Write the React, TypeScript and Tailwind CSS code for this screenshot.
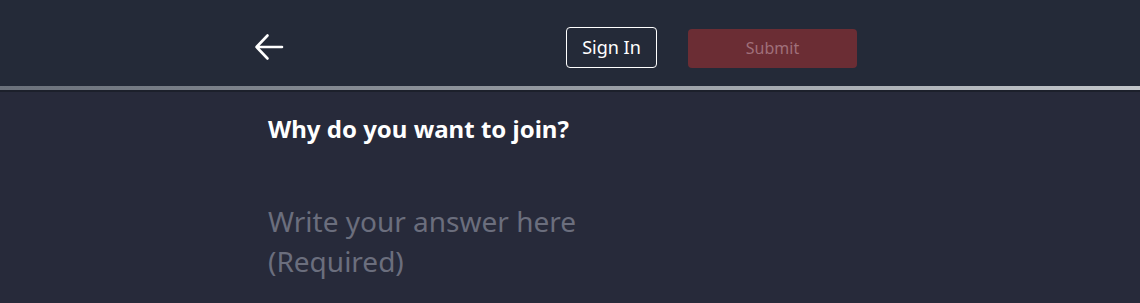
export default function App() {
  return (
    <div className="min-h-[303px] bg-[#272a3a] font-['Noto_Sans',sans-serif]">
      {/* Header */}
      <header className="bg-[#242a38]">
        <div className="mx-auto flex h-[86px] w-[604px] items-center pt-[8px]">
          <button className="-ml-[14px] flex h-[28px] w-[30px] items-center text-white" aria-label="Back">
            <svg width="30" height="28" viewBox="0 0 30 28" fill="none" stroke="currentColor" strokeWidth="2.6" strokeLinecap="round" strokeLinejoin="round">
              <path d="M28 14H2.5M13.5 2.5L2.5 14l11 11.5" />
            </svg>
          </button>
          <div className="ml-auto mr-[15px] flex items-center gap-[31px]">
            <button className="h-[41px] w-[91px] rounded-[4px] border border-white text-[18px] text-white">
              Sign In
            </button>
            <button className="mt-[2px] h-[39px] w-[169px] rounded-[4px] bg-[#6b2d34] text-[16px] text-[#a0707a]" disabled>
              Submit
            </button>
          </div>
        </div>
      </header>
      <div className="h-[4px] bg-gradient-to-r from-[#6b717b] to-[#c2c6ca]" />
      <div className="h-[2px] bg-[#1c202b]" />

      {/* Question */}
      <main className="mx-auto w-[604px] pt-[21px]">
        <h2 className="text-[24px] font-bold leading-[32px] text-white">Why do you want to join?</h2>
        <textarea
          className="mt-[56px] h-[90px] w-full resize-none bg-transparent text-[28px] leading-[40px] text-white outline-none placeholder:text-[#6b6e7d]"
          placeholder={"Write your answer here\n(Required)"}
        />
      </main>
    </div>
  );
}
